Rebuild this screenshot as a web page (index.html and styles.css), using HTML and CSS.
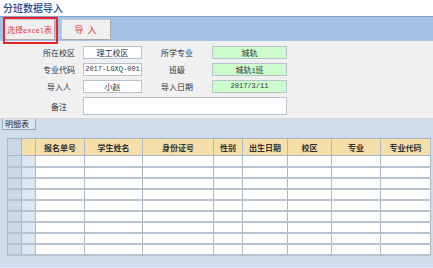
FILE: index.html
```html
<!DOCTYPE html>
<html lang="zh-CN">

<head>
    <meta charset="UTF-8">
    <title>分班数据导入</title>
    <link rel="stylesheet" href="styles.css">
</head>

<body>
    <h1 class="title">分班数据导入</h1>

    <div class="toolbar">
        <button class="btn btn-pick">选择<span class="latin">excel</span>表</button>
        <button class="btn btn-import">导&nbsp;入</button>
    </div>

    <div class="form">
        <label>所在校区</label>
        <div class="field">理工校区</div>
        <label>所学专业</label>
        <div class="field green">城轨</div>

        <label>专业代码</label>
        <div class="field latin">2017-LGXQ-001</div>
        <label>班级</label>
        <div class="field green">城轨<span class="latin">1</span>班</div>

        <label>导入人</label>
        <div class="field">小赵</div>
        <label>导入日期</label>
        <div class="field green latin">2017/3/11</div>

        <label>备注</label>
        <div class="field memo"></div>
    </div>

    <div class="panel">
        <div class="tab">明细表</div>
        <table class="grid">
            <colgroup>
                <col style="width:14px">
                <col style="width:14px">
                <col style="width:49px">
                <col style="width:58px">
                <col style="width:71px">
                <col style="width:29px">
                <col style="width:45px">
                <col style="width:44px">
                <col style="width:49px">
                <col style="width:50px">
            </colgroup>
            <thead>
                <tr>
                    <th class="corner"></th>
                    <th></th>
                    <th>报名单号</th>
                    <th>学生姓名</th>
                    <th>身份证号</th>
                    <th>性别</th>
                    <th>出生日期</th>
                    <th>校区</th>
                    <th>专业</th>
                    <th>专业代码</th>
                </tr>
            </thead>
            <tbody id="rows"></tbody>
        </table>
    </div>

    <script>
        let rows = document.getElementById('rows');
        for (let i = 0; i < 9; i++) {
            let tr = document.createElement('tr');
            tr.innerHTML = '<td class="rowhead"></td><td class="sel"></td>' + '<td></td>'.repeat(8);
            rows.appendChild(tr);
        }
    </script>
</body>

</html>
```

FILE: styles.css
```css
* {
    margin: 0;
    padding: 0;
    box-sizing: border-box;
}

body {
    width: 433px;
    height: 268px;
    overflow: hidden;
    background: #fff;
    color: #333;
    font-family: "Noto Sans CJK SC", sans-serif;
    font-size: 8px;
}

.latin {
    font-family: "Liberation Mono", monospace;
    font-size: 7px;
}

.title {
    height: 16px;
    padding-left: 3px;
    font-size: 10px;
    line-height: 15px;
    font-weight: 500;
    color: #1b4796;
}

/* toolbar */
.toolbar {
    display: flex;
    gap: 6px;
    height: 25px;
    padding: 2px 0 0 4px;
    background: #a6c3e6;
    border-top: 1px solid #7fa3d0;
}

.btn {
    position: relative;
    width: 51px;
    height: 21px;
    background: #efefef;
    border: 1px solid #c9c9c9;
    border-right-color: #a8a8a8;
    border-bottom-color: #a8a8a8;
    color: #e23a3a;
    font-family: "Noto Sans CJK SC", sans-serif;
    font-size: 9px;
}

.btn-pick {
    font-size: 8px;
}

.btn-import {
    width: 50px;
    letter-spacing: 1px;
}

.btn-pick::after {
    content: "";
    position: absolute;
    left: -2px;
    top: -3px;
    right: -4px;
    bottom: -5px;
    border: 2px solid #e5252b;
}

/* form */
.form {
    display: grid;
    grid-template-columns: 48px 59px 70px 75px;
    grid-template-rows: 13px 13px 13px 18px;
    row-gap: 4px;
    align-items: center;
    height: 78px;
    padding: 5px 0 0 35px;
    background: #f0f0f0;
    border-bottom: 1px solid #d6d6d6;
}

.form label {
    text-align: center;
    color: #333;
}

.field {
    height: 100%;
    background: #fff;
    border: 1px solid #b9c2cc;
    text-align: center;
    line-height: 11px;
}

.field.green {
    background: #ccfccc;
}

.field.memo {
    grid-column: 2 / 5;
}

/* detail panel */
.panel {
    height: 149px;
    background: #cedceb;
    padding-left: 7px;
    border-bottom: 1px solid #e6edf5;
}

.tab {
    width: 34px;
    height: 11px;
    margin-left: -5px;
    padding-left: 2px;
    line-height: 10px;
    background: #dde6f0;
    border: 1px solid #93a8c0;
    border-top: none;
    color: #1c2b40;
}

.grid {
    margin-top: 8px;
    width: 423px;
    table-layout: fixed;
    border-collapse: collapse;
}

.grid th,
.grid td {
    border: 1px solid #a9b7c7;
}

.grid th {
    height: 17px;
    background: #f4dfa8;
    font-weight: bold;
    font-size: 8px;
    color: #333;
}

.grid th.corner {
    background: #c9d8e8;
}

.grid td {
    height: 11px;
    background: #fff;
    border-bottom-width: 2px;
    border-bottom-color: #b8c3cf;
}

.grid td.rowhead {
    background: #c9d8e8;
}

.grid td.sel {
    background: #dce7f3;
}
```
